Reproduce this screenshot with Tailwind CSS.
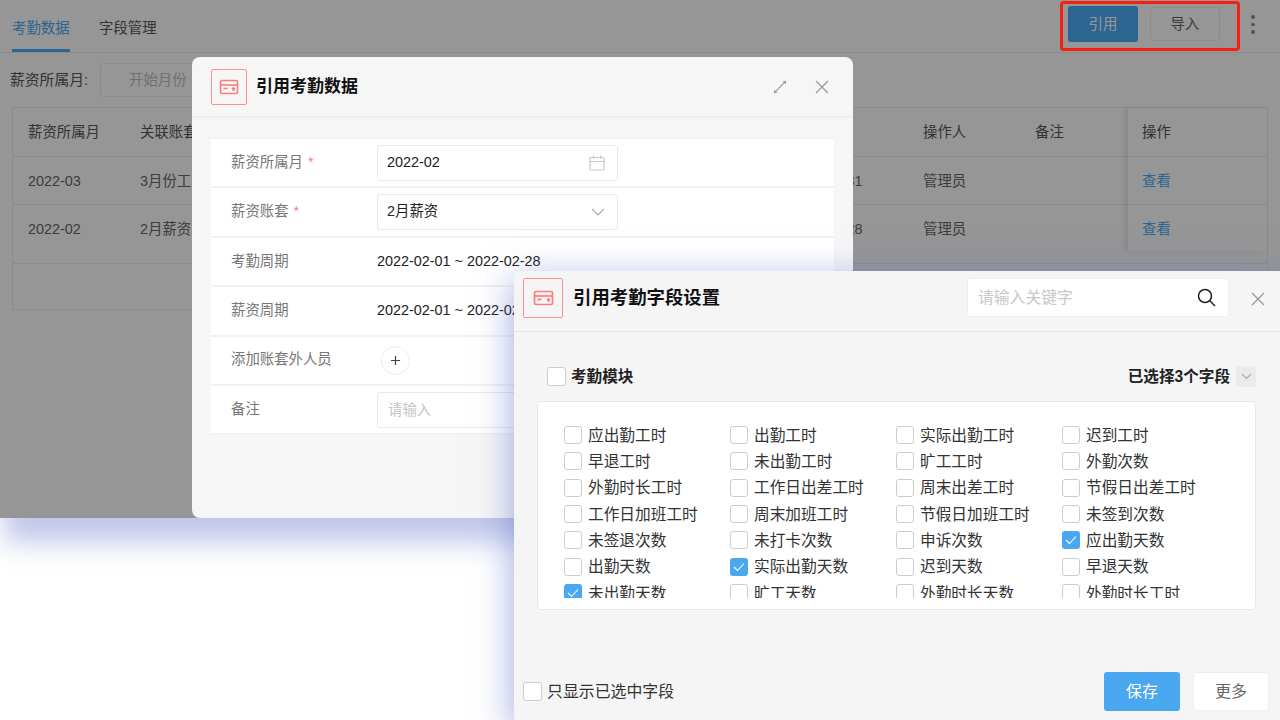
<!DOCTYPE html>
<html lang="zh-CN">
<head>
<meta charset="utf-8">
<title>引用考勤数据</title>
<script src="https://cdn.jsdelivr.net/npm/@tailwindcss/browser@4"></script>
</head>
<body class="bg-white">
<div class="relative w-[1280px] h-[720px] overflow-hidden bg-white font-['Liberation_Sans','Noto_Sans_CJK_SC',sans-serif] text-[14.4px]">

  <!-- Back window -->
  <div class="absolute left-0 top-0 w-[1280px] h-[518px] shadow-[0_28px_25px_-4px_rgba(90,110,200,0.38)]">
    <div class="relative w-full h-full overflow-hidden bg-[#fafafa]">
      <div class="flex items-start h-[53px] border-b border-[#e8e8e8] px-3 text-[#555]">
        <div class="h-[52px] w-[58px] leading-[57px] border-b-[3px] border-[#4aa8f0] text-[#4aa8f0]">考勤数据</div>
        <div class="ml-[29px] leading-[57px]">字段管理</div>
        <div class="ml-auto mr-[130px] mt-[6px] w-[70px] h-9 rounded-[3px] bg-[#4aa8f0] text-white text-center leading-9">引用</div>
        <div class="absolute left-[1150px] top-[7px] w-[70px] h-[34px] rounded-[3px] border border-[#e8e8e8] text-center leading-[32px] text-[#666]">导入</div>
        <div class="absolute left-[1251px] top-[15px] flex flex-col gap-[4px]">
          <span class="w-[3.5px] h-[3.5px] rounded-full bg-[#888]"></span>
          <span class="w-[3.5px] h-[3.5px] rounded-full bg-[#888]"></span>
          <span class="w-[3.5px] h-[3.5px] rounded-full bg-[#888]"></span>
        </div>
      </div>
      <div class="flex items-center h-[34px] mt-[10px] pl-[10px] text-[#555]">
        <span class="w-[90px] text-[14.8px]">薪资所属月:</span>
        <div class="w-[300px] h-[34px] rounded-[3px] border border-[#e8e8e8] pl-[28px] leading-[32px] text-[#bbb]">开始月份</div>
      </div>
      <div class="mx-3 mt-[10px] h-[203px] border border-[#e8e8e8] flex text-[#666]">
        <div class="w-[1115px]">
          <div class="grid grid-cols-[15px_112px_112px_537px_134px_112px_93px] h-[49px] pt-[2px] items-center border-b border-[#e8e8e8] text-[#555]">
            <span></span><span>薪资所属月</span><span>关联账套</span><span></span><span>操作时间</span><span>操作人</span><span>备注</span>
          </div>
          <div class="grid grid-cols-[15px_112px_112px_537px_134px_112px_93px] h-[48px] pt-[2px] items-center border-b border-[#e8e8e8]">
            <span></span><span>2022-03</span><span>3月份工资</span><span></span><span>2022-03-31</span><span>管理员</span><span></span>
          </div>
          <div class="grid grid-cols-[15px_112px_112px_537px_134px_112px_93px] h-[48px] pt-[2px] items-center">
            <span></span><span>2022-02</span><span>2月薪资</span><span></span><span>2022-02-28</span><span>管理员</span><span></span>
          </div>
        </div>
        <div class="w-[139px] h-[143px] shadow-[-3px_0_5px_rgba(0,0,0,0.1)]">
          <div class="h-[49px] pl-[14px] leading-[48px] border-b border-[#e8e8e8] text-[#555]">操作</div>
          <div class="h-[48px] pl-[14px] pt-[1px] leading-[47px] border-b border-[#e8e8e8] text-[#4aa8f0]">查看</div>
          <div class="h-[48px] pl-[14px] pt-[1px] leading-[47px] text-[#4aa8f0]">查看</div>
        </div>
      </div>
      <div class="absolute left-3 top-[263px] w-[1256px] border-t border-[#e8e8e8]"></div>
      <div class="absolute inset-0 bg-black/40"></div>
      <div class="absolute left-[1060px] top-[1px] w-[180px] h-[50px] rounded-[4px] border-[3px] border-[#f5200f]"></div>

      <!-- Modal -->
      <div class="absolute left-[192px] top-[57px] w-[661px] h-[461px] rounded-t-[8px] rounded-bl-[8px] bg-[#f6f6f6] flex flex-col">
        <div class="flex items-center h-[61px] border-b-2 border-[#eeeeee] pl-[19px] pr-[24px] shrink-0">
          <div class="w-9 h-9 rounded-[2px] border border-[#ff8f8f] flex items-center justify-center">
            <svg width="20" height="16" viewBox="0 0 20 16" fill="none" stroke="#ff7c7c" stroke-width="1.6"><rect x="1.5" y="1.5" width="17" height="13" rx="1.5"/><path d="M1.5 6h17"/><path d="M4.5 9.5h4"/><path d="M13 9h3l-1.5 3z" fill="#ff7c7c" stroke-width="1"/></svg>
          </div>
          <div class="ml-[9px] pt-[1px] text-[17px] font-bold text-[#111]">引用考勤数据</div>
          <svg class="ml-auto" width="16" height="16" viewBox="0 0 16 16" fill="none" stroke="#a3a3a3" stroke-width="1.2"><path d="M2 14 14 2"/><path d="M14 2v3.6L10.4 2z" fill="#a3a3a3" stroke="none"/><path d="M2 14v-3.6L5.6 14z" fill="#a3a3a3" stroke="none"/></svg>
          <svg class="ml-[27px]" width="14" height="14" viewBox="0 0 14 14" fill="none" stroke="#999" stroke-width="1.2"><path d="M1 1l12 12M13 1 1 13"/></svg>
        </div>
        <div class="mx-[19px] mt-[19px] bg-white border-t-2 border-[#f2f2f2] text-[#222]">
          <div class="flex items-center h-[49.4px] border-b-2 border-[#f2f2f2]">
            <span class="w-[166px] pl-5 text-[#777]">薪资所属月 <span class="ml-[1px] text-[#ff7c7c]">*</span></span>
            <div class="flex items-center justify-between w-[241px] h-9 rounded-[3px] border border-[#e8e8e8] pl-[9px] pr-[12px]">
              <span>2022-02</span>
              <svg width="16" height="16" viewBox="0 0 16 16" fill="none" stroke="#c8c8c8" stroke-width="1.2"><rect x="1" y="2.5" width="14" height="12.5" rx="1"/><path d="M1 6.5h14M4.5 0.5v3M11.5 0.5v3"/></svg>
            </div>
          </div>
          <div class="flex items-center h-[49.4px] border-b-2 border-[#f2f2f2]">
            <span class="w-[166px] pl-5 text-[#777]">薪资账套 <span class="ml-[1px] text-[#ff7c7c]">*</span></span>
            <div class="flex items-center justify-between w-[241px] h-9 rounded-[3px] border border-[#e8e8e8] pl-[9px] pr-[12px]">
              <span>2月薪资</span>
              <svg width="14" height="8" viewBox="0 0 14 8" fill="none" stroke="#aaa" stroke-width="1.2"><path d="M1 1l6 6 6-6"/></svg>
            </div>
          </div>
          <div class="flex items-center h-[49.4px] border-b-2 border-[#f2f2f2]">
            <span class="w-[166px] pl-5 text-[#777]">考勤周期</span>
            <span>2022-02-01 ~ 2022-02-28</span>
          </div>
          <div class="flex items-center h-[49.4px] border-b-2 border-[#f2f2f2]">
            <span class="w-[166px] pl-5 text-[#777]">薪资周期</span>
            <span>2022-02-01 ~ 2022-02-28</span>
          </div>
          <div class="flex items-center h-[49.4px] border-b-2 border-[#f2f2f2]">
            <span class="w-[170px] pl-5 text-[#777]">添加账套外人员</span>
            <div class="w-[29px] h-[29px] rounded-full border border-[#eeeeee] flex items-center justify-center">
              <svg width="11" height="11" viewBox="0 0 11 11" stroke="#444" stroke-width="1.2"><path d="M5.5 1v9M1 5.5h9"/></svg>
            </div>
          </div>
          <div class="flex items-center h-[49.4px] border-b-2 border-[#f2f2f2]">
            <span class="w-[166px] pl-5 text-[#777]">备注</span>
            <div class="w-[300px] h-9 rounded-[3px] border border-[#e8e8e8] px-[10px] leading-[34px] text-[#c4c4c4]">请输入</div>
          </div>
        </div>
      </div>
    </div>
  </div>

  <!-- Front window -->
  <div class="absolute left-[514px] top-[271px] w-[766px] h-[449px] bg-[#f5f5f5] flex flex-col shadow-[0_10px_35px_rgba(90,110,200,0.6)]">
    <div class="flex items-center h-[61px] shrink-0 border-b border-[#e6e6e6] pl-[9px] pr-[15px] pb-[7px]">
      <div class="w-10 h-10 rounded-[2px] border border-[#ff8f8f] flex items-center justify-center">
        <svg width="21" height="16" viewBox="0 0 21 16" fill="none" stroke="#ff7c7c" stroke-width="1.7"><rect x="1.5" y="1.5" width="18" height="13" rx="1.5"/><path d="M1.5 6h18"/><path d="M4.5 9.5h4"/><path d="M14 9h3l-1.5 3z" fill="#ff7c7c" stroke-width="1"/></svg>
      </div>
      <div class="ml-[10px] text-[18.4px] font-bold text-[#111]">引用考勤字段设置</div>
      <div class="ml-auto flex items-center justify-between w-[262px] h-[39px] rounded-[3px] bg-white border border-[#eeeeee] pl-[10px] pr-[12px] text-[15.8px] text-[#c8c8c8]">
        <span>请输入关键字</span>
        <svg width="19" height="19" viewBox="0 0 19 19" fill="none" stroke="#222" stroke-width="1.5"><circle cx="8" cy="8" r="6.5"/><path d="M12.8 12.8 18 18"/></svg>
      </div>
      <svg class="ml-[22px] mt-[3px]" width="14" height="14" viewBox="0 0 14 14" fill="none" stroke="#999" stroke-width="1.3"><path d="M1 1l12 12M13 1 1 13"/></svg>
    </div>

    <div class="flex items-center h-[21px] mt-[34px] ml-[33px] mr-[24px] text-[15.6px] font-bold text-[#222]">
      <span class="w-[19px] h-[19px] rounded-[3px] border border-[#cccccc] bg-white"></span>
      <span class="ml-[5px]">考勤模块</span>
      <span class="ml-auto">已选择3个字段</span>
      <span class="ml-[6px] w-5 h-[21px] rounded-[3px] bg-[#ebebeb] flex items-center justify-center">
        <svg width="11" height="7" viewBox="0 0 11 7" fill="none" stroke="#aaa" stroke-width="1.1"><path d="M1 1l4.5 4.5L10 1"/></svg>
      </span>
    </div>

    <div class="mt-[14px] ml-[23px] w-[719px] h-[209px] shrink-0 rounded-[4px] bg-white border border-[#e8e8e8]">
      <div class="h-[196px] overflow-hidden pt-[20px] pl-[26px] grid grid-cols-[166px_166px_166px_166px] auto-rows-[26.3px] text-[15.7px] text-[#333]">
        <label class="flex items-center gap-[6px]"><span class="w-[18px] h-[18px] rounded-[3px] border border-[#cccccc]"></span><span class="pt-[1px]">应出勤工时</span></label>
        <label class="flex items-center gap-[6px]"><span class="w-[18px] h-[18px] rounded-[3px] border border-[#cccccc]"></span><span class="pt-[1px]">出勤工时</span></label>
        <label class="flex items-center gap-[6px]"><span class="w-[18px] h-[18px] rounded-[3px] border border-[#cccccc]"></span><span class="pt-[1px]">实际出勤工时</span></label>
        <label class="flex items-center gap-[6px]"><span class="w-[18px] h-[18px] rounded-[3px] border border-[#cccccc]"></span><span class="pt-[1px]">迟到工时</span></label>

        <label class="flex items-center gap-[6px]"><span class="w-[18px] h-[18px] rounded-[3px] border border-[#cccccc]"></span><span class="pt-[1px]">早退工时</span></label>
        <label class="flex items-center gap-[6px]"><span class="w-[18px] h-[18px] rounded-[3px] border border-[#cccccc]"></span><span class="pt-[1px]">未出勤工时</span></label>
        <label class="flex items-center gap-[6px]"><span class="w-[18px] h-[18px] rounded-[3px] border border-[#cccccc]"></span><span class="pt-[1px]">旷工工时</span></label>
        <label class="flex items-center gap-[6px]"><span class="w-[18px] h-[18px] rounded-[3px] border border-[#cccccc]"></span><span class="pt-[1px]">外勤次数</span></label>

        <label class="flex items-center gap-[6px]"><span class="w-[18px] h-[18px] rounded-[3px] border border-[#cccccc]"></span><span class="pt-[1px]">外勤时长工时</span></label>
        <label class="flex items-center gap-[6px]"><span class="w-[18px] h-[18px] rounded-[3px] border border-[#cccccc]"></span><span class="pt-[1px]">工作日出差工时</span></label>
        <label class="flex items-center gap-[6px]"><span class="w-[18px] h-[18px] rounded-[3px] border border-[#cccccc]"></span><span class="pt-[1px]">周末出差工时</span></label>
        <label class="flex items-center gap-[6px]"><span class="w-[18px] h-[18px] rounded-[3px] border border-[#cccccc]"></span><span class="pt-[1px]">节假日出差工时</span></label>

        <label class="flex items-center gap-[6px]"><span class="w-[18px] h-[18px] rounded-[3px] border border-[#cccccc]"></span><span class="pt-[1px]">工作日加班工时</span></label>
        <label class="flex items-center gap-[6px]"><span class="w-[18px] h-[18px] rounded-[3px] border border-[#cccccc]"></span><span class="pt-[1px]">周末加班工时</span></label>
        <label class="flex items-center gap-[6px]"><span class="w-[18px] h-[18px] rounded-[3px] border border-[#cccccc]"></span><span class="pt-[1px]">节假日加班工时</span></label>
        <label class="flex items-center gap-[6px]"><span class="w-[18px] h-[18px] rounded-[3px] border border-[#cccccc]"></span><span class="pt-[1px]">未签到次数</span></label>

        <label class="flex items-center gap-[6px]"><span class="w-[18px] h-[18px] rounded-[3px] border border-[#cccccc]"></span><span class="pt-[1px]">未签退次数</span></label>
        <label class="flex items-center gap-[6px]"><span class="w-[18px] h-[18px] rounded-[3px] border border-[#cccccc]"></span><span class="pt-[1px]">未打卡次数</span></label>
        <label class="flex items-center gap-[6px]"><span class="w-[18px] h-[18px] rounded-[3px] border border-[#cccccc]"></span><span class="pt-[1px]">申诉次数</span></label>
        <label class="flex items-center gap-[6px]"><span class="w-[18px] h-[18px] rounded-[3px] bg-[#4aa8f0] flex items-center justify-center"><svg width="12" height="10" viewBox="0 0 12 10" fill="none" stroke="#fff" stroke-width="1.1"><path d="M1 5l3.5 3.5L11 1.5"/></svg></span><span class="pt-[1px]">应出勤天数</span></label>

        <label class="flex items-center gap-[6px]"><span class="w-[18px] h-[18px] rounded-[3px] border border-[#cccccc]"></span><span class="pt-[1px]">出勤天数</span></label>
        <label class="flex items-center gap-[6px]"><span class="w-[18px] h-[18px] rounded-[3px] bg-[#4aa8f0] flex items-center justify-center"><svg width="12" height="10" viewBox="0 0 12 10" fill="none" stroke="#fff" stroke-width="1.1"><path d="M1 5l3.5 3.5L11 1.5"/></svg></span><span class="pt-[1px]">实际出勤天数</span></label>
        <label class="flex items-center gap-[6px]"><span class="w-[18px] h-[18px] rounded-[3px] border border-[#cccccc]"></span><span class="pt-[1px]">迟到天数</span></label>
        <label class="flex items-center gap-[6px]"><span class="w-[18px] h-[18px] rounded-[3px] border border-[#cccccc]"></span><span class="pt-[1px]">早退天数</span></label>

        <label class="flex items-center gap-[6px]"><span class="w-[18px] h-[18px] rounded-[3px] bg-[#4aa8f0] flex items-center justify-center"><svg width="12" height="10" viewBox="0 0 12 10" fill="none" stroke="#fff" stroke-width="1.1"><path d="M1 5l3.5 3.5L11 1.5"/></svg></span><span class="pt-[1px]">未出勤天数</span></label>
        <label class="flex items-center gap-[6px]"><span class="w-[18px] h-[18px] rounded-[3px] border border-[#cccccc]"></span><span class="pt-[1px]">旷工天数</span></label>
        <label class="flex items-center gap-[6px]"><span class="w-[18px] h-[18px] rounded-[3px] border border-[#cccccc]"></span><span class="pt-[1px]">外勤时长天数</span></label>
        <label class="flex items-center gap-[6px]"><span class="w-[18px] h-[18px] rounded-[3px] border border-[#cccccc]"></span><span class="pt-[1px]">外勤时长工时</span></label>
      </div>
    </div>

    <div class="flex items-center mt-[62px] pl-[9px] pr-[11px]">
      <span class="w-[19px] h-[19px] rounded-[3px] border border-[#cccccc] bg-white"></span>
      <span class="ml-[5px] text-[15.9px] text-[#333]">只显示已选中字段</span>
      <div class="ml-auto w-[76px] h-[39px] rounded-[3px] bg-[#4aa8f0] text-white text-center text-[16px] leading-[39px]">保存</div>
      <div class="ml-[13px] w-[76px] h-[39px] rounded-[3px] bg-white border border-[#eeeeee] text-[#666] text-center text-[16px] leading-[37px]">更多</div>
    </div>
  </div>
</div>
</body>
</html>
